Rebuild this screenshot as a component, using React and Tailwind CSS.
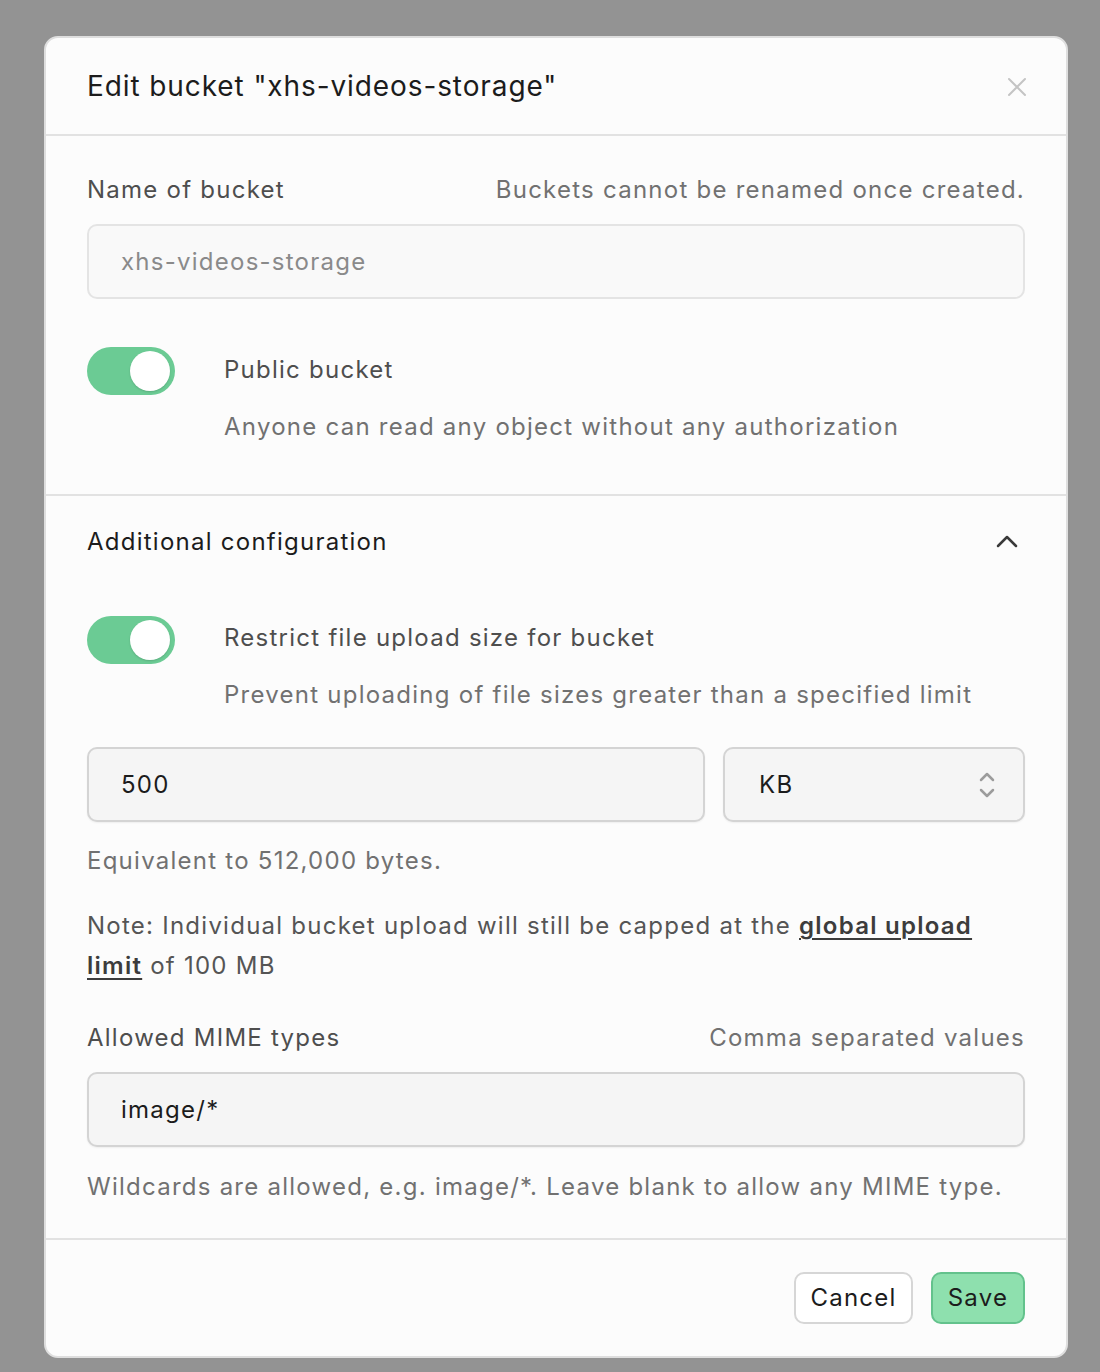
import React from "react";

function Toggle() {
  return (
    <div className="relative h-[48px] w-[88px] shrink-0 rounded-full bg-[#6bcb94]">
      <div className="absolute right-[5px] top-[4px] h-[40px] w-[40px] rounded-full bg-white shadow-[0_1px_2px_rgba(0,0,0,0.15)]" />
    </div>
  );
}

export default function App() {
  return (
    <div
      className="min-h-[1372px] w-full bg-[#939393] pl-[44px] pt-[36px] tracking-[1.25px]"
      style={{ fontFamily: "Inter, 'Noto Sans', sans-serif" }}
    >
      <div className="flex h-[1322px] w-[1024px] flex-col overflow-hidden rounded-[14px] border-2 border-[#dedede] bg-[#fcfcfc]">
        {/* Header */}
        <div className="flex h-[98px] shrink-0 items-center justify-between border-b-2 border-[#e2e2e2] pl-[41px] pr-[38px]">
          <h1 className="text-[28px] leading-[36px] text-[#1c1c1c] tracking-[0.9px]">
            Edit bucket "xhs-videos-storage"
          </h1>
          <svg width="22" height="22" viewBox="0 0 22 22" className="mt-[2px]">
            <path d="M3 3 L19 19 M19 3 L3 19" stroke="#c4c4c4" strokeWidth="2" strokeLinecap="round" />
          </svg>
        </div>

        {/* Section 1 */}
        <div className="shrink-0 border-b-2 border-[#e2e2e2] px-[41px] pb-[51px] pt-[38px]">
          <div className="flex items-center justify-between text-[24px] leading-[32px]">
            <span className="text-[#4e4e4e]">Name of bucket</span>
            <span className="text-[#717171]">Buckets cannot be renamed once created.</span>
          </div>
          <div className="mt-[18px] flex h-[75px] items-center rounded-[10px] border-2 border-[#e4e4e4] bg-[#f9f9f9] px-[32px] text-[24px] text-[#8a8a8a]">
            xhs-videos-storage
          </div>
          <div className="mt-[48px] flex items-start gap-[49px]">
            <Toggle />
            <div className="pt-[7px] text-[24px] leading-[32px]">
              <div className="text-[#4e4e4e]">Public bucket</div>
              <div className="mt-[25px] text-[#717171]">
                Anyone can read any object without any authorization
              </div>
            </div>
          </div>
        </div>

        {/* Section 2 */}
        <div className="shrink-0 border-b-2 border-[#e2e2e2] px-[41px] pb-[35px] pt-[30px]">
          <div className="flex items-center justify-between text-[24px] leading-[32px]">
            <span className="text-[#1c1c1c]">Additional configuration</span>
            <svg width="24" height="24" viewBox="0 0 24 24" className="mr-[6px]">
              <path d="M3 16 L12 7 L21 16" fill="none" stroke="#3a3a3a" strokeWidth="2.5" strokeLinecap="round" strokeLinejoin="round" />
            </svg>
          </div>
          <div className="mt-[58px] flex items-start gap-[49px]">
            <Toggle />
            <div className="pt-[6px] text-[24px] leading-[32px]">
              <div className="text-[#4e4e4e]">Restrict file upload size for bucket</div>
              <div className="mt-[25px] text-[#717171]">
                Prevent uploading of file sizes greater than a specified limit
              </div>
            </div>
          </div>
          <div className="mt-[36px] flex gap-[18px]">
            <div className="flex h-[75px] flex-1 items-center rounded-[10px] border-2 border-[#d4d4d4] bg-[#f5f5f5] px-[32px] text-[24px] text-[#1c1c1c] shadow-[0_1px_2px_rgba(0,0,0,0.06)]">
              500
            </div>
            <div className="flex h-[75px] w-[302px] items-center justify-between rounded-[10px] border-2 border-[#d4d4d4] bg-[#f5f5f5] pl-[34px] pr-[26px] text-[24px] text-[#1c1c1c] shadow-[0_1px_2px_rgba(0,0,0,0.06)]">
              <span>KB</span>
              <svg width="20" height="32" viewBox="0 0 20 32">
                <path d="M4 11 L10 5 L16 11" fill="none" stroke="#9c9c9c" strokeWidth="2.5" strokeLinecap="round" strokeLinejoin="round" />
                <path d="M4 21 L10 27 L16 21" fill="none" stroke="#9c9c9c" strokeWidth="2.5" strokeLinecap="round" strokeLinejoin="round" />
              </svg>
            </div>
          </div>
          <div className="mt-[23px] text-[24px] leading-[32px] text-[#717171]">
            Equivalent to 512,000 bytes.
          </div>
          <div className="mt-[29px] text-[24px] leading-[40px] text-[#555555]">
            Note: Individual bucket upload will still be capped at the{" "}
            <span className="font-semibold text-[#3c3c3c] underline decoration-2 underline-offset-[4px]">
              global upload limit
            </span>{" "}
            of 100 MB
          </div>
          <div className="mt-[36px] flex items-center justify-between text-[24px] leading-[32px]">
            <span className="text-[#4e4e4e]">Allowed MIME types</span>
            <span className="text-[#717171]">Comma separated values</span>
          </div>
          <div className="mt-[18px] flex h-[75px] items-center rounded-[10px] border-2 border-[#d4d4d4] bg-[#f5f5f5] px-[32px] text-[24px] text-[#1c1c1c] shadow-[0_1px_2px_rgba(0,0,0,0.06)]">
            image/*
          </div>
          <div className="mt-[24px] text-[24px] leading-[32px] text-[#717171]">
            Wildcards are allowed, e.g. image/*. Leave blank to allow any MIME type.
          </div>
        </div>

        {/* Footer */}
        <div className="flex flex-1 items-start justify-end gap-[18px] px-[41px] pt-[32px]">
          <button className="flex h-[52px] w-[119px] items-center justify-center rounded-[10px] border-2 border-[#d6d6d6] bg-white text-[24px] text-[#1c1c1c]">
            Cancel
          </button>
          <button className="flex h-[52px] w-[94px] items-center justify-center rounded-[10px] border-2 border-[#63c28c] bg-[#8ee0ae] text-[24px] text-[#1c1c1c]">
            Save
          </button>
        </div>
      </div>
    </div>
  );
}
